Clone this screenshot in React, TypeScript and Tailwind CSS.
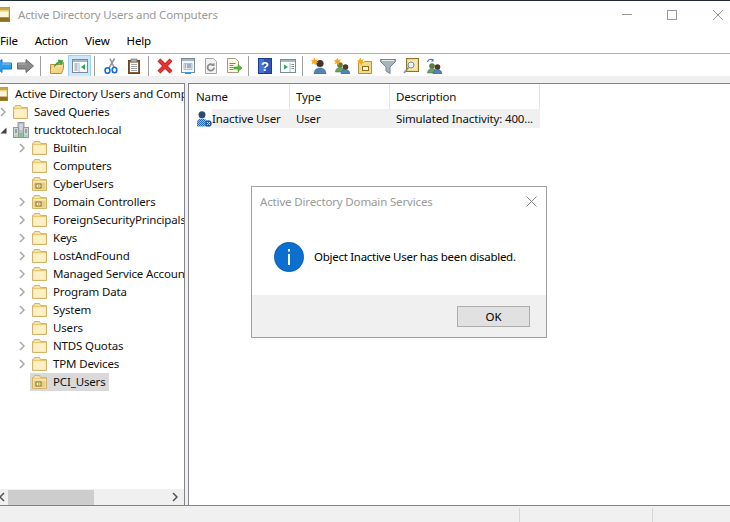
const FONT = '[font-family:"Noto_Sans","Open_Sans",sans-serif]';

type IconProps = { className?: string };

function FolderIcon({ ou = false }: { ou?: boolean }) {
  return (
    <svg viewBox="0 0 15 14" className="h-[14px] w-[15px] shrink-0">
      <path d="M.5 2.500h1l1-2h5l1 2h6v11H.5z" fill="#f7e2a0" stroke="#d3b368" />
      <path d="M1.500 4.500h12v8h-12z" fill="#fcf0c4" />
      <path d="M1 3.500h13" stroke="#e8c978" />
      {ou && (
        <>
          <path d="M1.500 5.500h12v7h-12z" fill="#e9cf84" />
          <rect x="4" y="7" width="5" height="4" fill="#fdf6d8" stroke="#8a6d24" />
          <rect x="6" y="8.500" width="1.500" height="1" fill="#8a6d24" />
        </>
      )}
    </svg>
  );
}

function DomainIcon() {
  return (
    <svg viewBox="0 0 16 16" className="h-4 w-4 shrink-0">
      <rect x="5" y="0.500" width="6" height="15" fill="#b6bfc4" stroke="#8f9ba1" />
      <rect x="0.500" y="5.500" width="5" height="10" fill="#cfd6d9" stroke="#8f9ba1" />
      <rect x="10.500" y="5.500" width="5" height="10" fill="#cfd6d9" stroke="#8f9ba1" />
      <path d="M6.500 3h3M6.500 5h3M6.500 7h3" stroke="#f2f5f6" />
      <path d="M2 8h2M2 10h2M12 8h2M12 10h2" stroke="#5f7078" />
      <rect x="6.500" y="11" width="3" height="4" fill="#7cc77b" />
      <rect x="1.500" y="13" width="3" height="2" fill="#a6d8a5" />
      <rect x="11.500" y="13" width="3" height="2" fill="#a6d8a5" />
    </svg>
  );
}

function ChevronRight() {
  return (
    <svg viewBox="0 0 6 10" className="h-[10px] w-[6px] shrink-0">
      <path d="M1 1l4 4-4 4" fill="none" stroke="#a6a6a6" strokeWidth="1.500" />
    </svg>
  );
}

function ChevronDown() {
  return (
    <svg viewBox="0 0 7 7" className="h-[7px] w-[7px] shrink-0">
      <path d="M6.500 .5v6h-6z" fill="#404040" />
    </svg>
  );
}

function Person({ x, y, head = '#4d3a2c', body = '#4f86b8' }: { x: number; y: number; head?: string; body?: string }) {
  return (
    <g transform={`translate(${x} ${y})`}>
      <path d="M0 10c0-3 2-4.500 4.500-4.500S9 7 9 10z" fill={body} stroke="#2e5c86" strokeWidth=".5" />
      <circle cx="4.500" cy="3" r="2.800" fill={head} />
    </g>
  );
}

function Star() {
  return <path d="M4 0l.9 2.400L7.500 1.500 6 3.800l2 1.200-2.500.3L5 8 3.500 5.800 1 6.800l1-2.500L0 3l2.600-.4z" fill="#f6a821" />;
}

function BackIcon() {
  return (
    <svg viewBox="0 0 18 16" className="h-4 w-[18px]">
      <path d="M.5 8L8 1.500V5h9.500v6H8v3.500z" fill="#2f9ceb" stroke="#1c74c4" />
      <path d="M8 6h9" stroke="#8fd0fa" />
    </svg>
  );
}

function ForwardIcon() {
  return (
    <svg viewBox="0 0 17 16" className="h-4 w-[17px]">
      <path d="M16.500 8L9 1.500V5H.5v6H9v3.500z" fill="#8c8c8c" stroke="#6b6b6b" />
      <path d="M1 6h8" stroke="#b5b5b5" />
    </svg>
  );
}

function UpFolderIcon() {
  return (
    <svg viewBox="0 0 16 16" className="h-4 w-4">
      <path d="M1.500 6.500h10l3-2v6l-2 5h-11z" fill="#f4d580" stroke="#b8913c" />
      <path d="M3 13l2-5h8" fill="none" stroke="#fbeebf" />
      <path d="M5 9c1-3 3-5 5-5l-1-2 5 .5-2 4.500-1-2c-2 .5-4 2-6 4z" fill="#3cae3c" stroke="#1f7d1f" strokeWidth=".5" />
    </svg>
  );
}

function WindowBase({ children }: { children?: React.ReactNode }) {
  return (
    <>
      <rect x="0.500" y="1.500" width="15" height="13" fill="#fbfdff" stroke="#7a8a96" />
      <path d="M1 2h14v2H1z" fill="#a9b7c2" />
      {children}
    </>
  );
}

function ShowTreeIcon() {
  return (
    <svg viewBox="0 0 16 16" className="h-4 w-4">
      <WindowBase>
        <path d="M2.500 6h3M2.500 8h3M2.500 10h3M2.500 12h3" stroke="#7a8a96" />
        <path d="M7 5v9" stroke="#a9b7c2" />
        <path d="M13 6v6L9 9z" fill="#2fa84f" />
      </WindowBase>
    </svg>
  );
}

function MmcIcon() {
  return (
    <svg viewBox="0 0 16 16" className="h-4 w-4">
      <WindowBase>
        <path d="M10 5v9" stroke="#a9b7c2" />
        <path d="M11.500 6.500h2.500M11.500 8.500h2.500M11.500 10.500h2.500" stroke="#7a8a96" />
        <path d="M4 6.500v5L8 9z" fill="#2fa84f" />
      </WindowBase>
    </svg>
  );
}

function CutIcon() {
  return (
    <svg viewBox="0 0 16 16" className="h-4 w-4">
      <path d="M11.500.5L6 10M7 .5l4 9" fill="none" stroke="#8a96a3" strokeWidth="1.500" />
      <ellipse cx="4.500" cy="12.500" rx="2.500" ry="2.800" fill="none" stroke="#1468d8" strokeWidth="1.600" />
      <ellipse cx="11.500" cy="12" rx="2.300" ry="2.800" fill="none" stroke="#1468d8" strokeWidth="1.600" />
    </svg>
  );
}

function PasteIcon() {
  return (
    <svg viewBox="0 0 16 16" className="h-4 w-4">
      <rect x="2.500" y="2.500" width="11" height="13" fill="#8a5a32" stroke="#6d4423" />
      <rect x="4" y="4.500" width="8" height="9.500" fill="#fff" />
      <path d="M5 6.500h6M5 8.500h6M5 10.500h6M5 12.500h6" stroke="#9aa7b0" />
      <rect x="5" y="1" width="6" height="3" fill="#a9b2b8" stroke="#5f6a70" strokeWidth=".6" />
    </svg>
  );
}

function DeleteIcon() {
  return (
    <svg viewBox="0 0 16 16" className="h-4 w-4">
      <path d="M2 2l12 12M14 2L2 14" stroke="#b51b1b" strokeWidth="4" />
      <path d="M2 2l12 12M14 2L2 14" stroke="#ea3232" strokeWidth="2.800" />
    </svg>
  );
}

function PropertiesIcon() {
  return (
    <svg viewBox="0 0 16 16" className="h-4 w-4">
      <rect x="1.500" y="0.500" width="13" height="14" fill="#f4f7f9" stroke="#7a8a96" />
      <path d="M2 1h12v2H2z" fill="#a9b7c2" />
      <path d="M4 5.500h8v6H4z" fill="#dfe7ee" stroke="#8fa0ac" strokeWidth=".6" />
      <path d="M5 7h1M7 7h4M5 9h1M7 9h4" stroke="#5d7486" />
      <rect x="5" y="14" width="6" height="2" fill="#2f9ceb" />
    </svg>
  );
}

function RefreshIcon() {
  return (
    <svg viewBox="0 0 16 16" className="h-4 w-4">
      <path d="M2.500.5h8l3 3v12h-11z" fill="#f2f2f2" stroke="#a8a8a8" />
      <path d="M11 9.500a3.200 3.200 0 1 1-1-2.400" fill="none" stroke="#8d8d8d" strokeWidth="1.800" />
      <path d="M11.500 4.500v3.500H8z" fill="#8d8d8d" />
    </svg>
  );
}

function ExportIcon() {
  return (
    <svg viewBox="0 0 16 16" className="h-4 w-4">
      <path d="M1.500.5h8l3 3v11h-11z" fill="#fdf9ea" stroke="#a59c80" />
      <path d="M3.500 5.500h6M3.500 7.500h4M3.500 9.500h4M3.500 11.500h4" stroke="#8d8468" />
      <path d="M8 9h4V6.500L16 10l-4 3.500V11H8z" fill="#55bb3a" stroke="#2f8d1f" strokeWidth=".5" />
    </svg>
  );
}

function HelpIcon() {
  return (
    <svg viewBox="0 0 16 16" className="h-4 w-4">
      <rect x="1.500" y="0.500" width="13" height="15" fill="#2f55b8" stroke="#1c3a8c" />
      <rect x="2" y="1" width="5" height="14" fill="#4a72d4" />
      <text x="8" y="13" textAnchor="middle" fontSize="13" fontWeight="700" fill="#fff" fontFamily="Liberation Sans">
        ?
      </text>
    </svg>
  );
}

function NewUserIcon() {
  return (
    <svg viewBox="0 0 16 16" className="h-4 w-4">
      <path d="M3 16c0-4 2.500-6 6-6s6 2 6 6z" fill="#4f86b8" stroke="#2e5c86" strokeWidth=".5" />
      <circle cx="9" cy="5.500" r="3.600" fill="#43342a" />
      <g transform="translate(-.5 -.5)">
        <Star />
      </g>
    </svg>
  );
}

function NewGroupIcon() {
  return (
    <svg viewBox="0 0 16 16" className="h-4 w-4">
      <Person x={1.500} y={4} head="#5e7d3a" body="#6fa356" />
      <Person x={7} y={6} />
      <g transform="translate(-.5 -.5)">
        <Star />
      </g>
    </svg>
  );
}

function NewOuIcon() {
  return (
    <svg viewBox="0 0 16 16" className="h-4 w-4">
      <path d="M1.500 4.500h5l1-1h7v12h-13z" fill="#f4d987" stroke="#b8913c" />
      <rect x="5.500" y="8.500" width="6" height="4" fill="#fdf6d8" stroke="#8a6d24" />
      <g transform="translate(-.5 -.5)">
        <Star />
      </g>
    </svg>
  );
}

function FilterIcon() {
  return (
    <svg viewBox="0 0 16 16" className="h-4 w-4">
      <path d="M.5 1.500h15v2L10 9v6.500L6 13V9L.5 3.500z" fill="#a8b4bd" stroke="#76848e" />
      <path d="M2 2.500h12" stroke="#e6edf1" />
    </svg>
  );
}

function FindIcon() {
  return (
    <svg viewBox="0 0 16 16" className="h-4 w-4">
      <rect x="3.500" y="0.500" width="12" height="13" fill="#efd98c" stroke="#8d7426" />
      <rect x="5" y="2" width="9" height="10" fill="#f6e8b2" />
      <circle cx="8" cy="7" r="3" fill="#e8f2f7" stroke="#7c8b93" />
      <path d="M5.500 9.500L1 15" stroke="#8d8d8d" strokeWidth="1.600" />
    </svg>
  );
}

function AddGroupIcon() {
  return (
    <svg viewBox="0 0 16 16" className="h-4 w-4">
      <Person x={1.500} y={5} head="#5e7d3a" body="#6fa356" />
      <Person x={7} y={6} />
      <path d="M1.500 4C2 1.500 5 .5 7 2" fill="none" stroke="#2f7fd6" strokeWidth="1.200" />
      <path d="M7.500 .5v3H5z" fill="#2f7fd6" />
    </svg>
  );
}

function DisabledUserIcon() {
  return (
    <svg viewBox="0 0 16 16" className="h-4 w-4 shrink-0">
      <defs>
        <pattern id="dither" width="2" height="2" patternUnits="userSpaceOnUse">
          <rect width="2" height="2" fill="#1f66bd" />
          <rect width="1" height="1" fill="#9cc0e6" />
          <rect x="1" y="1" width="1" height="1" fill="#9cc0e6" />
        </pattern>
      </defs>
      <circle cx="6" cy="3.800" r="3.500" fill="#2a4a70" />
      <path d="M1 15.500V11c0-2 2-3.500 5-3.500s5 1.500 5 3.500v4.500z" fill="url(#dither)" />
      <circle cx="12.500" cy="12.500" r="3.200" fill="#235c9e" />
      <path d="M11 11l3 3M14 11l-3 3" stroke="#cfe0f2" />
    </svg>
  );
}

function MmcAppIcon({ className }: IconProps) {
  return (
    <svg viewBox="0 0 16 16" className={className}>
      <rect x="0.500" y="0.500" width="15" height="15" fill="#f1d98d" stroke="#a98a35" />
      <rect x="0.500" y="0.500" width="15" height="3" fill="#c8a548" />
      <rect x="2" y="5" width="12" height="6" fill="#fdf6d8" />
      <rect x="0.500" y="11" width="15" height="4.500" fill="#8d7020" />
    </svg>
  );
}

function ToolButton({ children, active = false }: { children: React.ReactNode; active?: boolean }) {
  return (
    <div
      className={`flex h-[22px] w-[23px] shrink-0 items-center justify-center border ${
        active ? 'border-[#99d1ff] bg-[#cce8ff]' : 'border-transparent'
      }`}
    >
      {children}
    </div>
  );
}

function ToolSep() {
  return (
    <div className="flex h-[22px] w-2 shrink-0 items-center pl-[3px]">
      <div className="h-[20px] w-px bg-[#a0a0a0]" />
    </div>
  );
}

function Toolbar() {
  return (
    <div className="flex h-[22px] items-center -ml-[9px]">
      <ToolButton><BackIcon /></ToolButton>
      <ToolButton><ForwardIcon /></ToolButton>
      <ToolSep />
      <ToolButton><UpFolderIcon /></ToolButton>
      <ToolButton active><ShowTreeIcon /></ToolButton>
      <ToolSep />
      <ToolButton><CutIcon /></ToolButton>
      <ToolButton><PasteIcon /></ToolButton>
      <ToolSep />
      <ToolButton><DeleteIcon /></ToolButton>
      <ToolButton><PropertiesIcon /></ToolButton>
      <ToolButton><RefreshIcon /></ToolButton>
      <ToolButton><ExportIcon /></ToolButton>
      <ToolSep />
      <ToolButton><HelpIcon /></ToolButton>
      <ToolButton><MmcIcon /></ToolButton>
      <ToolSep />
      <ToolButton><NewUserIcon /></ToolButton>
      <ToolButton><NewGroupIcon /></ToolButton>
      <ToolButton><NewOuIcon /></ToolButton>
      <ToolButton><FilterIcon /></ToolButton>
      <ToolButton><FindIcon /></ToolButton>
      <ToolButton><AddGroupIcon /></ToolButton>
    </div>
  );
}

const CONTAINERS: { name: string; ou?: boolean; arrow?: boolean; selected?: boolean }[] = [
  { name: 'Builtin', arrow: true },
  { name: 'Computers' },
  { name: 'CyberUsers', ou: true },
  { name: 'Domain Controllers', ou: true, arrow: true },
  { name: 'ForeignSecurityPrincipals', arrow: true },
  { name: 'Keys', arrow: true },
  { name: 'LostAndFound', arrow: true },
  { name: 'Managed Service Accounts', arrow: true },
  { name: 'Program Data', arrow: true },
  { name: 'System', arrow: true },
  { name: 'Users' },
  { name: 'NTDS Quotas', arrow: true },
  { name: 'TPM Devices', arrow: true },
  { name: 'PCI_Users', ou: true, selected: true },
];

function Tree() {
  return (
    <div className="flex min-w-0 flex-1 flex-col overflow-hidden pt-px">
      <div className="flex h-[18px] items-center whitespace-nowrap">
        <MmcAppIcon className="-ml-[6px] h-[14px] w-[14px] shrink-0" />
        <span className="ml-[7px]">Active Directory Users and Computers</span>
      </div>
      <div className="flex h-[18px] items-center whitespace-nowrap">
        <span className="flex w-[13px] shrink-0"><ChevronRight /></span>
        <FolderIcon />
        <span className="ml-[6px]">Saved Queries</span>
      </div>
      <div className="flex h-[18px] items-center whitespace-nowrap">
        <span className="flex w-[13px] shrink-0"><ChevronDown /></span>
        <DomainIcon />
        <span className="ml-[5px]">trucktotech.local</span>
      </div>
      {CONTAINERS.map((c) => (
        <div key={c.name} className="flex h-[18px] items-center whitespace-nowrap pl-[19px]">
          <span className="flex w-[13px] shrink-0">{c.arrow && <ChevronRight />}</span>
          <span
            className={`-ml-[2px] flex h-full items-center pr-[3px] pl-[2px] ${c.selected ? 'bg-[#d9d9d9]' : ''}`}
          >
            <FolderIcon ou={c.ou} />
            <span className="ml-[6px]">{c.name}</span>
          </span>
        </div>
      ))}
    </div>
  );
}

function TreeScrollbar() {
  return (
    <div className="flex h-4 shrink-0 items-center bg-[#f0f0f0] text-[#505050]">
      <svg viewBox="0 0 6 10" className="-ml-[1px] h-[10px] w-[6px] shrink-0">
        <path d="M5 1L1 5l4 4" fill="none" stroke="#505050" strokeWidth="1.500" />
      </svg>
      <div className="ml-[3px] h-[15px] w-[86px] bg-[#cdcdcd]" />
      <svg viewBox="0 0 6 10" className="ml-[78px] h-[10px] w-[6px] shrink-0">
        <path d="M1 1l4 4-4 4" fill="none" stroke="#505050" strokeWidth="1.500" />
      </svg>
    </div>
  );
}

function ListPane() {
  return (
    <div className="min-w-0 flex-1 border-t border-l border-[#82828c] bg-white">
      <div className="flex h-[25px] w-[351px] items-center">
        <div className="flex h-full w-[101px] items-center border-r border-[#e5e5e5] pl-[7px]">Name</div>
        <div className="flex h-full w-[100px] items-center border-r border-[#e5e5e5] pl-[6px]">Type</div>
        <div className="flex h-full w-[150px] items-center border-r border-[#e5e5e5] pl-[6px]">Description</div>
      </div>
      <div className="flex h-[19px] w-[351px] items-center whitespace-nowrap">
        <div className="flex h-full w-[101px] shrink-0 items-center pl-[7px]">
          <DisabledUserIcon />
          <span className="flex h-full flex-1 items-center bg-[#f0f0f0]">Inactive User</span>
        </div>
        <div className="flex h-full w-[100px] shrink-0 items-center bg-[#f0f0f0] pl-[6px]">User</div>
        <div className="flex h-full w-[150px] shrink-0 items-center bg-[#f0f0f0] pl-[6px]">Simulated Inactivity: 400...</div>
      </div>
    </div>
  );
}

function Dialog() {
  return (
    <div className="absolute top-[186px] left-[251px] flex h-[152px] w-[296px] flex-col border border-[#a0a0a0] bg-white">
      <div className="flex h-[29px] shrink-0 items-center justify-between pr-[9px] pl-[8px] text-[#999]">
        <span>Active Directory Domain Services</span>
        <svg viewBox="0 0 11 11" className="h-[11px] w-[11px]">
          <path d="M.5.5l10 10M10.500.5l-10 10" stroke="#888" />
        </svg>
      </div>
      <div className="flex flex-1 items-center pt-[2px] pl-[22px]">
        <svg viewBox="0 0 30 30" className="h-[30px] w-[30px] shrink-0">
          <circle cx="15" cy="15" r="14.700" fill="#0b6fcf" stroke="#0a4f96" strokeWidth=".6" />
          <rect x="14" y="7" width="2" height="2.500" fill="#fff" />
          <rect x="14" y="12" width="2" height="11" fill="#fff" />
        </svg>
        <span className="ml-[10px] tracking-[-0.28px] text-black">Object Inactive User has been disabled.</span>
      </div>
      <div className="flex h-[42px] shrink-0 items-start justify-end bg-[#f0f0f0] pt-[11px] pr-[16px]">
        <div className="flex h-[21px] w-[73px] items-center justify-center border border-[#adadad] bg-[#e1e1e1] text-black">
          OK
        </div>
      </div>
    </div>
  );
}

export default function App() {
  return (
    <div
      className={`relative flex h-[522px] w-[730px] flex-col overflow-hidden bg-white text-[11.5px] tracking-[-0.15px] text-[#111] ${FONT}`}
    >
      <div className="h-px shrink-0 bg-[#1f2a38]" />
      <div className="flex h-[27px] shrink-0 items-center overflow-hidden">
        <MmcAppIcon className="-ml-[5px] h-[15px] w-[15px] shrink-0" />
        <span className="ml-[8px] text-[#999]">Active Directory Users and Computers</span>
        <div className="ml-auto flex items-center pr-[7px]">
          <div className="h-px w-[10px] bg-[#999]" />
          <div className="ml-[35px] h-[10px] w-[10px] border border-[#999]" />
          <svg viewBox="0 0 10 10" className="ml-[36px] h-[10px] w-[10px]">
            <path d="M0 0l10 10M10 0L0 10" stroke="#999" />
          </svg>
        </div>
      </div>
      <div className="flex h-[26px] shrink-0 items-center gap-[17px] border-b border-[#b0afb8] text-black">
        <span>File</span>
        <span>Action</span>
        <span>View</span>
        <span>Help</span>
      </div>
      <div className="h-[22px] shrink-0 overflow-hidden pt-px">
        <Toolbar />
      </div>
      <div className="flex min-h-0 flex-1 border-b border-[#82828c] bg-[#f0f0f0] pt-[7px]">
        <div className="flex h-full w-[185px] shrink-0 flex-col border-t border-r border-[#82828c] bg-white">
          <Tree />
          <TreeScrollbar />
        </div>
        <div className="w-[3px] shrink-0" />
        <ListPane />
      </div>
      <div className="flex h-4 shrink-0 bg-[#f0f0f0] pt-[2px]">
        <div className="w-[520px] border-r border-[#d7d7d7]" />
        <div className="w-[133px] border-r border-[#d7d7d7]" />
      </div>
      <Dialog />
    </div>
  );
}
